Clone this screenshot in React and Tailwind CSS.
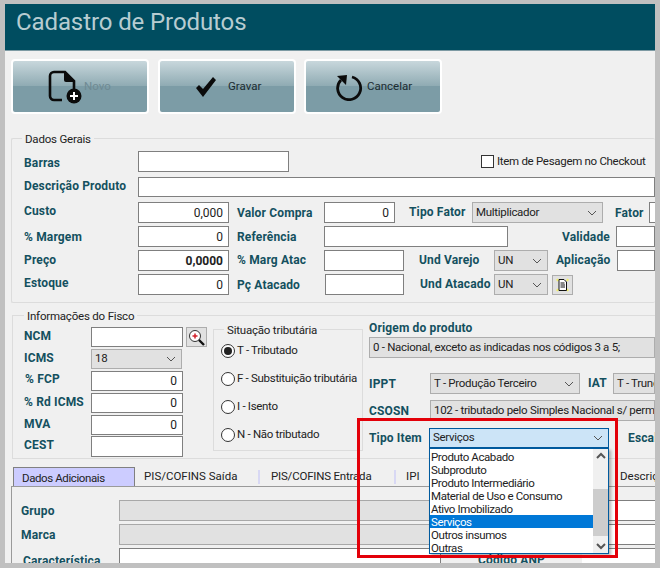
const Label = ({ className = '', children }) => (
  <span className={`shrink-0 whitespace-nowrap text-[12px] font-bold leading-none tracking-[0.15px] text-[#14505f] ${className}`}>{children}</span>
);

const Input = ({ className = '', children }) => (
  <div className={`flex shrink-0 items-center justify-end border border-[#7f7f7f] bg-white pr-[5px] text-[12px] leading-none text-[#222] ${className}`}>{children}</div>
);

const Chevron = () => (
  <svg width="10" height="6" viewBox="0 0 10 6" className="shrink-0">
    <path d="M1 1l4 4 4-4" fill="none" stroke="#555" strokeWidth="1" />
  </svg>
);

const Select = ({ className = '', children }) => (
  <div className={`flex shrink-0 items-center justify-between overflow-hidden border border-[#adadad] bg-[#e1e1e1] pl-[3px] pr-[5px] text-[11.5px] leading-none tracking-[-0.3px] text-[#222] ${className}`}>
    <span className="whitespace-nowrap">{children}</span>
    <Chevron />
  </div>
);

const Legend = ({ className = '', children }) => (
  <span className={`absolute -top-[8px] whitespace-nowrap bg-[#f0f0f0] px-[3px] text-[11.5px] leading-[16px] tracking-[-0.2px] text-[#222] ${className}`}>{children}</span>
);

const Radio = ({ checked, className = '', children }) => (
  <div className={`flex h-[14px] items-center gap-[2px] whitespace-nowrap text-[11.5px] leading-none tracking-[-0.3px] text-[#222] ${className}`}>
    <span className="flex h-[14px] w-[14px] shrink-0 items-center justify-center rounded-full border border-[#333] bg-white">
      {checked && <span className="h-[8px] w-[8px] rounded-full bg-[#222]" />}
    </span>
    {children}
  </div>
);

const ToolButton = ({ className = '', icon, label, muted }) => (
  <div className={`flex h-[55px] w-[138px] items-center rounded-[4px] border-2 border-white bg-[linear-gradient(to_bottom,#c8d7dc_0%,#8eaab2_50%,#7c9ca6_50%,#7c9ca6_100%)] text-[11.5px] ${muted ? 'text-[#6f8a93]' : 'text-[#1b2b30]'} ${className}`}>
    {icon}
    {label}
  </div>
);

const items = ['Produto Acabado', 'Subproduto', 'Produto Intermediário', 'Material de Uso e Consumo', 'Ativo Imobilizado', 'Serviços', 'Outros insumos', 'Outras'];

const App = () => {
  return (
    <div className="h-[568px] w-[660px] overflow-hidden bg-[#c0c0c0] pl-[5px] pr-[5px] pt-[4px] font-['Roboto',sans-serif]">
      <div className="relative flex h-[559px] flex-col overflow-hidden bg-[#f0f0f0]">

        {/* Header */}
        <div className="h-[47px] shrink-0 border-b border-[#7d9aa3] bg-[#004d60] pl-[11px] pt-[2px] text-[24px] leading-[32px] tracking-[-0.1px] text-[#b7ccd1]">
          Cadastro de Produtos
        </div>

        {/* Toolbar */}
        <div className="mt-[8px] flex shrink-0 pl-[6px]">
          <ToolButton
            muted
            className="pl-[35px]"
            label="Novo"
            icon={
              <svg width="36" height="34" viewBox="0 0 36 34" className="shrink-0">
                <path d="M6 2h11l9 9v9M14 30H6a4 4 0 0 1-4-4V6a4 4 0 0 1 4-4" fill="none" stroke="#0b0b0b" strokeWidth="2.6" />
                <path d="M16 2v8a2 2 0 0 0 2 2h8z" fill="#0b0b0b" />
                <circle cx="26" cy="26" r="7.5" fill="#0b0b0b" />
                <path d="M26 22v8M22 26h8" stroke="#fff" strokeWidth="2" />
              </svg>
            }
          />
          <ToolButton
            className="ml-[9px] pl-[35px]"
            label="Gravar"
            icon={
              <svg width="22" height="20" viewBox="0 0 22 20" className="mr-[11px] shrink-0">
                <path d="M1 11l3-3 4 4L18 0l3 3L8 20z" fill="#0b0b0b" />
              </svg>
            }
          />
          <ToolButton
            className="ml-[8px] pl-[30px]"
            label="Cancelar"
            icon={
              <svg width="28" height="28" viewBox="0 0 28 28" className="mr-[3px] shrink-0">
                <path d="M5 7a11.5 11.5 0 1 0 11-3" fill="none" stroke="#0b0b0b" strokeWidth="2.8" />
                <path d="M1 3l10-1-1 10z" fill="#0b0b0b" />
              </svg>
            }
          />
        </div>

        {/* Dados Gerais */}
        <div className="relative ml-[6px] mt-[24px] h-[165px] shrink-0 rounded-[2px] border-y border-l border-[#dcdcdc] pl-[12px] pt-[12px]">
          <Legend className="left-[10px]">Dados Gerais</Legend>
          <div className="flex h-[21px] items-center">
            <Label className="w-[114px] pt-[3px]">Barras</Label>
            <Input className="h-[21px] w-[151px]" />
            <span className="ml-[192px] h-[13px] w-[13px] shrink-0 border border-[#333] bg-white" />
            <span className="ml-[3px] whitespace-nowrap text-[11.5px] leading-none tracking-[-0.3px] text-[#222]">Item de Pesagem no Checkout</span>
          </div>
          <div className="mt-[5px] flex h-[20px] items-center">
            <Label className="w-[114px] pb-[2px]">Descrição Produto</Label>
            <Input className="h-[20px] flex-1" />
          </div>
          <div className="mt-[5px] flex h-[21px] items-center">
            <Label className="w-[114px] pb-[4px]">Custo</Label>
            <Input className="h-[21px] w-[91px]">0,000</Input>
            <Label className="ml-[8px] w-[87px]">Valor Compra</Label>
            <Input className="h-[21px] w-[71px]">0</Input>
            <Label className="ml-[14px] w-[63px] pb-[2px]">Tipo Fator</Label>
            <Select className="h-[21px] w-[131px]">Multiplicador</Select>
            <Label className="ml-[12px] w-[34px]">Fator</Label>
            <Input className="h-[21px] flex-1" />
          </div>
          <div className="mt-[3px] flex h-[21px] items-center">
            <Label className="w-[114px]">% Margem</Label>
            <Input className="h-[21px] w-[91px]">0</Input>
            <Label className="ml-[8px] w-[87px]">Referência</Label>
            <Input className="h-[21px] w-[184px]" />
            <Label className="ml-[54px] w-[54px]">Validade</Label>
            <Input className="h-[21px] flex-1" />
          </div>
          <div className="mt-[3px] flex h-[21px] items-center">
            <Label className="w-[114px] pb-[2px]">Preço</Label>
            <Input className="h-[21px] w-[91px] font-bold">0,0000</Input>
            <Label className="ml-[8px] w-[87px] pb-[2px]">% Marg Atac</Label>
            <Input className="h-[21px] w-[80px]" />
            <Label className="ml-[15px] w-[75px] pb-[2px]">Und Varejo</Label>
            <Select className="h-[21px] w-[54px]">UN</Select>
            <Label className="ml-[8px] w-[61px] pb-[2px]">Aplicação</Label>
            <Input className="h-[21px] flex-1" />
          </div>
          <div className="mt-[3px] flex h-[21px] items-center">
            <Label className="w-[114px] pb-[4px]">Estoque</Label>
            <Input className="h-[21px] w-[91px]">0</Input>
            <Label className="ml-[8px] w-[88px]">Pç Atacado</Label>
            <Input className="h-[21px] w-[79px]" />
            <Label className="ml-[16px] w-[74px] pb-[2px]">Und Atacado</Label>
            <Select className="h-[21px] w-[54px]">UN</Select>
            <div className="ml-[4px] flex h-[20px] w-[21px] shrink-0 items-center justify-center border border-[#adadad] bg-[#e1e1e1]">
              <svg width="13" height="14" viewBox="0 0 13 14">
                <path d="M1 1l1 2M12 1l-1 2M1 13l1-2M12 13l-1-2" stroke="#f2ef6a" strokeWidth="2" />
                <path d="M3 1.5h5l2.5 2.5v8.500H3z" fill="#fff" stroke="#111" />
                <path d="M4.500 5h4M4.500 7h4.500M4.500 9h4.500" stroke="#111" />
              </svg>
            </div>
          </div>
        </div>

        {/* Informações do Fisco */}
        <div className="relative ml-[7px] mt-[12px] flex h-[144px] shrink-0 border-y border-l border-[#dcdcdc] pl-[11px]">
          <Legend className="left-[11px]">Informações do Fisco</Legend>

          <div className="flex w-[183px] shrink-0 flex-col gap-[2px] pt-[11px]">
            <div className="flex h-[20px] items-center">
              <Label className="w-[67px] pb-[2px]">NCM</Label>
              <Input className="h-[20px] w-[92px]" />
              <div className="ml-[3px] flex h-[20px] w-[21px] shrink-0 items-center justify-center border border-[#adadad] bg-[#e1e1e1]">
                <svg width="17" height="17" viewBox="0 0 17 17">
                  <path d="M10 10l6 6" stroke="#111" strokeWidth="2.400" />
                  <circle cx="7" cy="7" r="5.500" fill="#fff" stroke="#333" />
                  <path d="M7 4.500v5M4.500 7h5" stroke="#d2202a" strokeWidth="1.500" />
                </svg>
              </div>
            </div>
            <div className="flex h-[20px] items-center">
              <Label className="w-[67px] pb-[2px]">ICMS</Label>
              <Select className="h-[20px] w-[91px]">18</Select>
            </div>
            <div className="flex h-[20px] items-center">
              <Label className="w-[67px] pb-[4px] pl-[1px]">% FCP</Label>
              <Input className="h-[20px] w-[92px]">0</Input>
            </div>
            <div className="flex h-[20px] items-center">
              <Label className="w-[67px] pb-[2px]">% Rd ICMS</Label>
              <Input className="h-[20px] w-[92px]">0</Input>
            </div>
            <div className="flex h-[20px] items-center">
              <Label className="w-[67px] pb-[2px]">MVA</Label>
              <Input className="h-[20px] w-[92px]">0</Input>
            </div>
            <div className="-mt-[1px] flex h-[21px] items-center">
              <Label className="w-[67px] pb-[4px]">CEST</Label>
              <Input className="h-[21px] w-[92px]" />
            </div>
          </div>

          <div className="relative ml-[6px] mt-[13px] flex h-[122px] w-[150px] shrink-0 flex-col gap-[14px] border border-[#dcdcdc] pl-[7px] pt-[14px]">
            <Legend className="left-[10px]">Situação tributária</Legend>
            <Radio checked>T - Tributado</Radio>
            <Radio>F - Substituição tributária</Radio>
            <Radio>I - Isento</Radio>
            <Radio>N - Não tributado</Radio>
          </div>

          <div className="ml-[6px] flex min-w-0 flex-1 flex-col pt-[6px]">
            <Label className="h-[15px] leading-[15px]">Origem do produto</Label>
            <div className="flex h-[21px] shrink-0 items-center whitespace-nowrap border border-[#adadad] bg-[#e1e1e1] pl-[3px] text-[11.5px] leading-none tracking-[-0.3px] text-[#222]">
              0 - Nacional, exceto as indicadas nos códigos 3 a 5;
            </div>
            <div className="mt-[15px] flex h-[21px] items-center">
              <Label className="w-[61px]">IPPT</Label>
              <Select className="h-[21px] w-[150px]">T - Produção Terceiro</Select>
              <Label className="ml-[8px] w-[25px] pb-[2px]">IAT</Label>
              <div className="flex h-[21px] flex-1 items-center overflow-hidden whitespace-nowrap border border-[#adadad] bg-[#e1e1e1] pl-[3px] text-[11.5px] leading-none tracking-[-0.3px] text-[#222]">T - Truncamento</div>
            </div>
            <div className="mt-[6px] flex h-[21px] items-center">
              <Label className="w-[61px]">CSOSN</Label>
              <div className="flex h-[21px] flex-1 items-center overflow-hidden whitespace-nowrap border border-[#adadad] bg-[#e1e1e1] pl-[3px] text-[11.5px] leading-none tracking-[-0.3px] text-[#222]">102 - tributado pelo Simples Nacional s/ permissão de crédito</div>
            </div>
            <div className="mt-[7px] flex h-[20px] items-center">
              <Label className="w-[60px]">Tipo Item</Label>
              <div className="relative flex h-[20px] w-[180px] shrink-0 items-center justify-between border border-[#005a9e] bg-[#cce4f7] pl-[3px] pr-[5px] text-[11.5px] leading-none tracking-[-0.3px] text-[#222]">
                Serviços
                <Chevron />

                {/* Open dropdown */}
                <div className="absolute -left-px top-[19px] z-20 flex h-[106px] w-[180px] border border-[#005a9e] bg-white shadow-[2px_2px_3px_rgba(0,0,0,0.3)]">
                  <div className="min-w-0 flex-1 pt-[1px]">
                    {items.map(item => (
                      <div key={item} className={`h-[13px] whitespace-nowrap pl-[1px] text-[11.5px] leading-[14px] tracking-[-0.4px] ${item === 'Serviços' ? 'bg-[#0078d7] text-white' : 'text-[#222]'}`}>{item}</div>
                    ))}
                  </div>
                  <div className="flex w-[15px] shrink-0 flex-col items-center bg-[#f0f0f0]">
                    <svg width="10" height="14" viewBox="0 0 10 14" className="shrink-0">
                      <path d="M1 9l4-4 4 4" fill="none" stroke="#555" strokeWidth="2" />
                    </svg>
                    <div className="mt-[26px] h-[47px] w-[15px] shrink-0 bg-[#cdcdcd]" />
                    <svg width="10" height="14" viewBox="0 0 10 14" className="mt-auto shrink-0">
                      <path d="M1 5l4 4 4-4" fill="none" stroke="#555" strokeWidth="2" />
                    </svg>
                  </div>
                </div>
              </div>
              <Label className="ml-[19px]">Escala</Label>
            </div>
          </div>
        </div>

        {/* Tabs */}
        <div className="ml-[8px] mt-[8px] flex h-[19px] shrink-0 items-center whitespace-nowrap text-[11.5px] leading-none text-[#222]">
          <div className="flex h-[19px] w-[122px] shrink-0 items-center border-x border-t border-[#808080] bg-[#ccccff] pl-[8px] pt-[3px] tracking-[-0.4px]">Dados Adicionais</div>
          <span className="ml-[9px] w-[114px] shrink-0">PIS/COFINS Saída</span>
          <span className="h-[14px] w-[2px] shrink-0 bg-[#d8d8f4]" />
          <span className="ml-[11px] w-[123px] shrink-0 tracking-[-0.2px]">PIS/COFINS Entrada</span>
          <span className="h-[14px] w-[2px] shrink-0 bg-[#d8d8f4]" />
          <span className="ml-[10px] w-[214px] shrink-0">IPI</span>
          <span>Descrição</span>
        </div>
        <div className="ml-[6px] flex-1 border-l border-t border-[#9a9a9a] pl-[9px] pt-[13px]">
          <div className="flex h-[21px] items-center">
            <Label className="w-[98px]">Grupo</Label>
            <div className="h-[21px] w-[322px] shrink-0 border border-[#a8a8a8] bg-[#e1e1e1]" />
            <div className="h-[21px] flex-1 border-y border-[#7f7f7f] bg-white" />
          </div>
          <div className="mt-[3px] flex h-[21px] items-center">
            <Label className="w-[98px]">Marca</Label>
            <div className="h-[21px] w-[322px] shrink-0 border border-[#a8a8a8] bg-[#e1e1e1]" />
            <div className="h-[21px] flex-1 border-y border-[#7f7f7f] bg-white" />
          </div>
          <div className="mt-[3px] flex h-[21px]">
            <Label className="w-[98px] pl-[2px] pt-[7px]">Característica</Label>
            <div className="h-[21px] w-[322px] shrink-0 border border-[#7f7f7f] bg-white" />
            <Label className="flex h-[21px] w-[141px] justify-center border-t border-[#7f7f7f] bg-[#f0f0f0] pt-[5px] text-[#222]">Código ANP</Label>
            <div className="h-[21px] flex-1 border-y border-[#7f7f7f] bg-white" />
          </div>
        </div>

        {/* Red highlight */}
        <div className="pointer-events-none absolute left-[352px] top-[414px] z-30 h-[140px] w-[261px] border-[3px] border-[#e30009]" />
      </div>
    </div>
  );
};

export default App;
